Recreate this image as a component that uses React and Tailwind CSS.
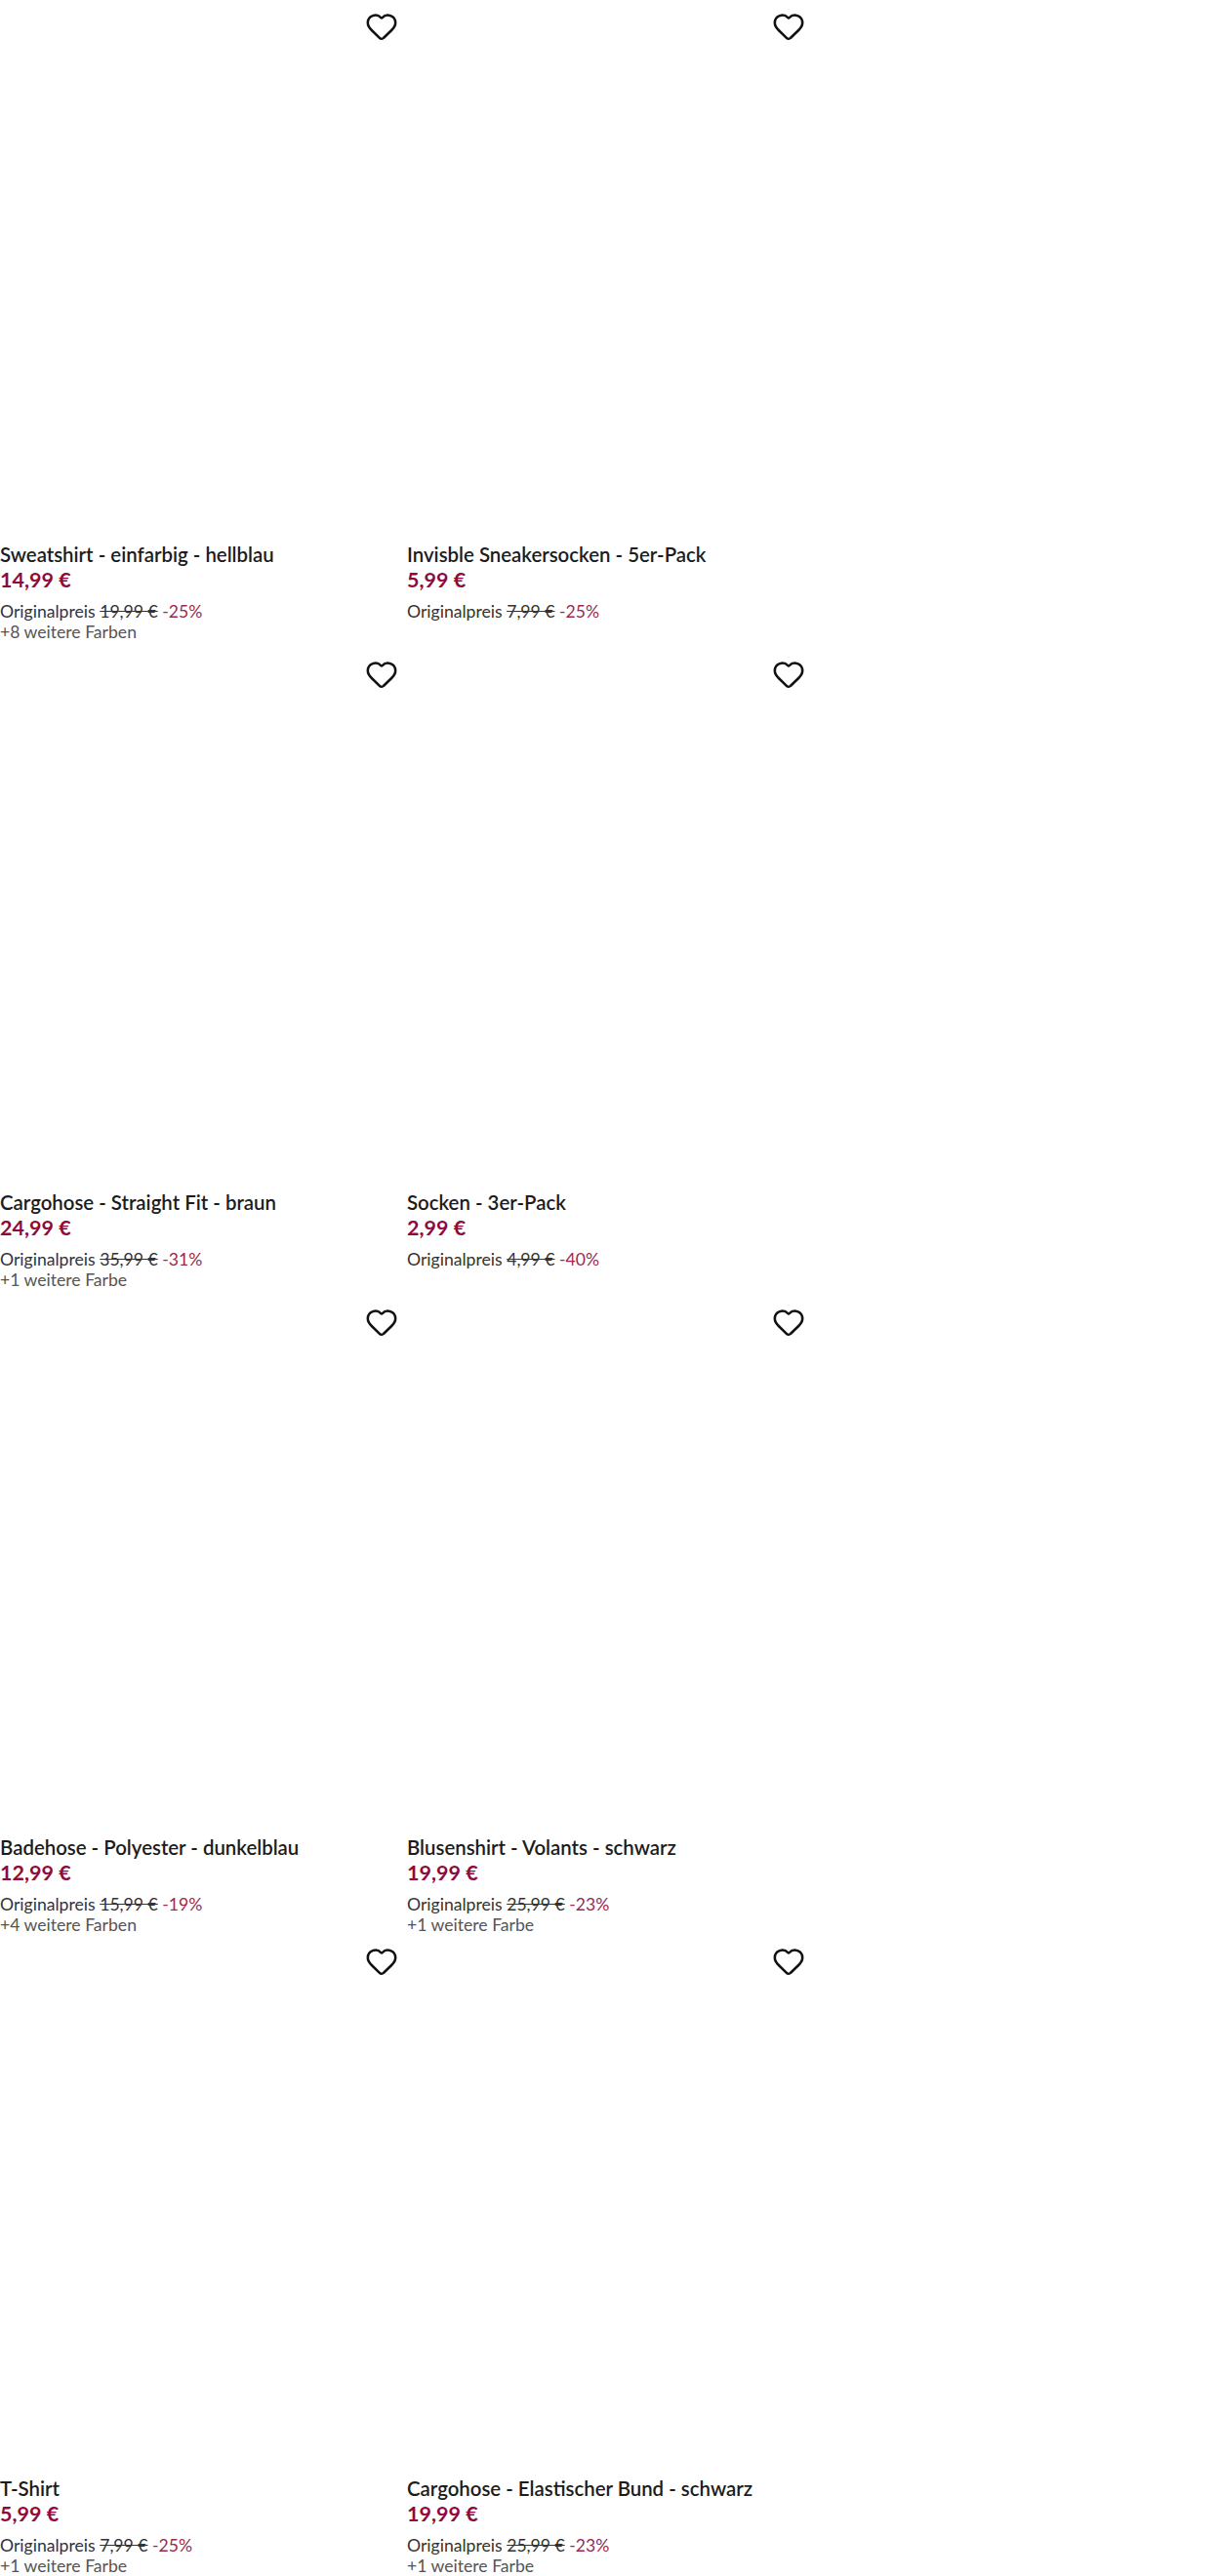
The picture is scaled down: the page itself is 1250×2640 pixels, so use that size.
import React from 'react';
import { Heart } from 'lucide-react';

const rows = [
  {
    cls: 'h-[664px]',
    items: [
      { title: 'Sweatshirt - einfarbig - hellblau', price: '14,99 €', old: '19,99 €', off: '-25%', more: '+8 weitere Farben' },
      { title: 'Invisble Sneakersocken - 5er-Pack', price: '5,99 €', old: '7,99 €', off: '-25%' },
    ],
  },
  {
    cls: 'h-[664px]',
    items: [
      { title: 'Cargohose - Straight Fit - braun', price: '24,99 €', old: '35,99 €', off: '-31%', more: '+1 weitere Farbe' },
      { title: 'Socken - 3er-Pack', price: '2,99 €', old: '4,99 €', off: '-40%' },
    ],
  },
  {
    cls: 'h-[655px]',
    items: [
      { title: 'Badehose - Polyester - dunkelblau', price: '12,99 €', old: '15,99 €', off: '-19%', more: '+4 weitere Farben' },
      { title: 'Blusenshirt - Volants - schwarz', price: '19,99 €', old: '25,99 €', off: '-23%', more: '+1 weitere Farbe' },
    ],
  },
  {
    cls: 'h-[657px]',
    items: [
      { title: 'T-Shirt', price: '5,99 €', old: '7,99 €', off: '-25%', more: '+1 weitere Farbe' },
      { title: 'Cargohose - Elastischer Bund - schwarz', price: '19,99 €', old: '25,99 €', off: '-23%', more: '+1 weitere Farbe' },
    ],
  },
];

function Card({ item }) {
  return (
    <div className="w-[417px] pr-[9px] flex flex-col">
      <div className="h-[555px] flex justify-end pt-[10px]">
        <Heart className="w-[34px] h-[34px] text-[#111]" strokeWidth={1.8} />
      </div>
      <p className="text-[20.4px] leading-[27px] font-semibold text-[#1c1c1c]">{item.title}</p>
      <p className="text-[21.5px] leading-[24px] font-bold text-[#8f0a3a] mb-[10px]">{item.price}</p>
      <p className="text-[17.6px] leading-[21px] text-[#333]">
        Originalpreis <span className="line-through">{item.old}</span>{' '}
        <span className="text-[#9a2a50]">{item.off}</span>
      </p>
      {item.more && <p className="text-[17.6px] leading-[21px] text-[#555]">{item.more}</p>}
    </div>
  );
}

export default function App() {
  return (
    <div className="w-[1250px] h-[2640px] bg-white overflow-hidden font-['Lato','Noto_Sans',sans-serif]">
      {rows.map((row, i) => (
        <div key={i} className={`flex ${row.cls}`}>
          {row.items.map((item) => (
            <Card key={item.title} item={item} />
          ))}
        </div>
      ))}
    </div>
  );
}
